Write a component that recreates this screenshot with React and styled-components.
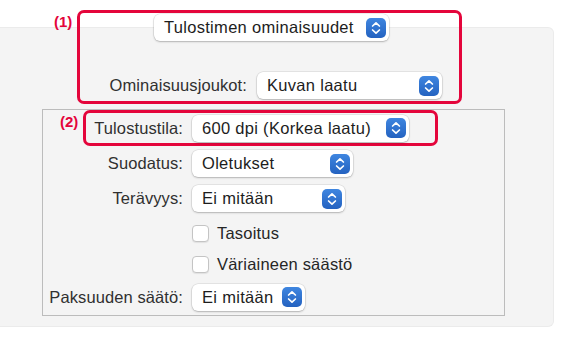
import React from 'react';
import styled, { createGlobalStyle } from 'styled-components';

const GlobalStyle = createGlobalStyle`
  html, body {
    margin: 0;
    padding: 0;
    background: #ffffff;
  }
  body {
    font-family: 'Liberation Sans', Arial, sans-serif;
    -webkit-font-smoothing: antialiased;
  }
`;

const Page = styled.div`
  width: 563px;
  height: 340px;
  padding-top: 27px;
  box-sizing: border-box;
  overflow: hidden;
`;

const Panel = styled.div`
  display: flex;
  flex-direction: column;
  width: 554px;
  height: 300px;
  box-sizing: border-box;
  background: #f4f4f4;
  border: 1px solid #ebebeb;
  border-left: none;
  border-radius: 0 6px 6px 0;
`;

const Highlight = styled.div`
  position: relative;
  display: flex;
  flex-direction: column;
  box-sizing: border-box;
  margin-top: ${({ top }) => top}px;
  margin-left: ${({ left }) => left}px;
  width: ${({ width }) => width}px;
  padding: ${({ pad }) => pad};
  border: 3px solid #e4053b;
  border-radius: 7px;
`;

const Mark = styled.span`
  position: absolute;
  left: -26px;
  top: ${({ top }) => top}px;
  font-size: 15px;
  font-weight: bold;
  color: #e4053b;
`;

const HeaderRow = styled.div`
  display: flex;
  padding-left: 74px;
`;

const InnerBox = styled.div`
  display: flex;
  flex-direction: column;
  box-sizing: border-box;
  margin: 5px 0 0 42px;
  width: 463px;
  height: 207px;
  border: 1px solid #bcbcbc;
`;

const Row = styled.div`
  display: flex;
  align-items: center;
  height: ${({ h }) => h}px;
  margin-top: ${({ mt }) => mt || 0}px;
`;

const Label = styled.div`
  width: ${({ w }) => w}px;
  margin-right: ${({ gap }) => gap}px;
  text-align: right;
  font-size: 16.5px;
  letter-spacing: 0.1px;
  color: #303030;
  white-space: nowrap;
`;

const PopupBox = styled.div`
  display: flex;
  align-items: center;
  justify-content: space-between;
  box-sizing: border-box;
  width: ${({ w }) => w}px;
  height: 27px;
  padding: 0 3px 0 10px;
  background: #ffffff;
  border-radius: 6px;
  box-shadow: 0 0 0 0.5px rgba(0, 0, 0, 0.12), 0 1px 2px rgba(0, 0, 0, 0.22);
  font-size: 16.5px;
  letter-spacing: 0.3px;
  color: #1d1d1d;
  white-space: nowrap;
`;

const Check = styled.span`
  box-sizing: border-box;
  width: 17px;
  height: 17px;
  margin-left: ${({ left }) => left}px;
  margin-right: 8px;
  background: #ffffff;
  border: 1px solid #c4c4c4;
  border-radius: 4px;
  box-shadow: 0 1px 1px rgba(0, 0, 0, 0.08);
`;

const CheckText = styled.span`
  font-size: 16.5px;
  letter-spacing: 0.2px;
  color: #262626;
`;

const Stepper = () => (
  <svg width="20" height="20" viewBox="0 0 20 20">
    <defs>
      <linearGradient id="stp" x1="0" y1="0" x2="0" y2="1">
        <stop offset="0" stopColor="#3f86e0" />
        <stop offset="1" stopColor="#2462c0" />
      </linearGradient>
    </defs>
    <rect x="0" y="0" width="20" height="20" rx="5" fill="url(#stp)" />
    <path
      d="M6.6 8 L10 4.8 L13.4 8 M6.6 12 L10 15.2 L13.4 12"
      fill="none"
      stroke="#ffffff"
      strokeWidth="1.7"
      strokeLinecap="round"
      strokeLinejoin="round"
    />
  </svg>
);

const Popup = ({ w, children }) => (
  <PopupBox w={w}>
    <span>{children}</span>
    <Stepper />
  </PopupBox>
);

const rows = [
  { label: 'Suodatus:', value: 'Oletukset', w: 161, h: 35 },
  { label: 'Terävyys:', value: 'Ei mitään', w: 153, h: 35 },
];

const checks = [
  { text: 'Tasoitus', h: 34 },
  { text: 'Väriaineen säästö', h: 29 },
];

export default function App() {
  return (
    <Page>
      <GlobalStyle />
      <Panel>
        <Highlight top={-18} left={77} width={385} pad="1px 0 2px 0">
          <Mark top={0}>(1)</Mark>
          <HeaderRow>
            <Popup w={235}>Tulostimen ominaisuudet</Popup>
          </HeaderRow>
          <Row h={27} mt={31}>
            <Label w={167} gap={10}>Ominaisuusjoukot:</Label>
            <Popup w={185}>Kuvan laatu</Popup>
          </Row>
        </Highlight>
        <InnerBox>
          <Highlight top={0} left={40} width={355} pad="0">
            <Mark top={0}>(2)</Mark>
            <Row h={30}>
              <Label w={97} gap={9}>Tulostustila:</Label>
              <Popup w={217}>600 dpi (Korkea laatu)</Popup>
            </Row>
          </Highlight>
          {rows.map((r) => (
            <Row key={r.label} h={r.h}>
              <Label w={140} gap={9}>{r.label}</Label>
              <Popup w={r.w}>{r.value}</Popup>
            </Row>
          ))}
          {checks.map((c) => (
            <Row key={c.text} h={c.h}>
              <Check left={149} />
              <CheckText>{c.text}</CheckText>
            </Row>
          ))}
          <Row h={36}>
            <Label w={140} gap={9}>Paksuuden säätö:</Label>
            <Popup w={113}>Ei mitään</Popup>
          </Row>
        </InnerBox>
      </Panel>
    </Page>
  );
}
